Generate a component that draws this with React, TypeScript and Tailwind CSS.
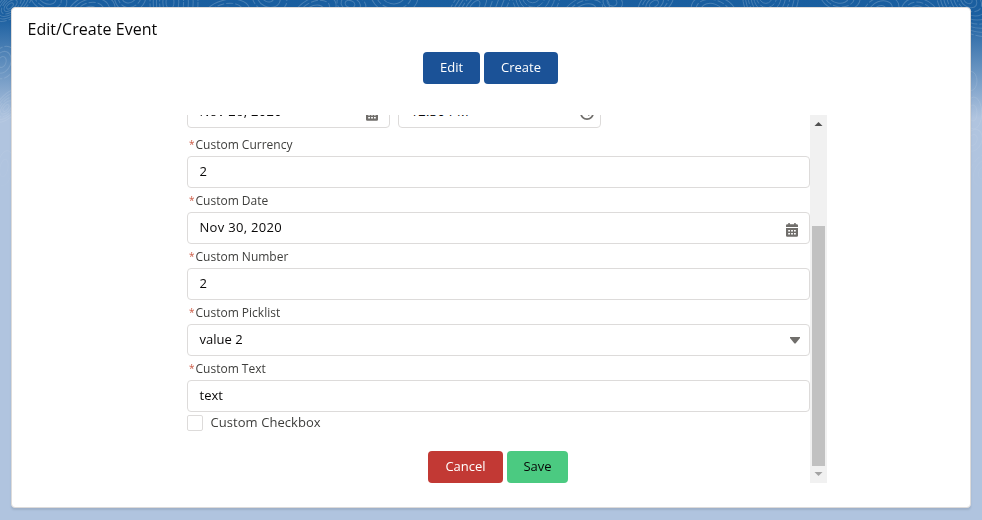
import React from "react";

type Hill = { x: number; y: number; rings: number; step: number; angle: number; squash: number };

const hills: Hill[] = [
  { x: 10, y: 6, rings: 6, step: 4, angle: -40, squash: 0.5 },
  { x: 2, y: 62, rings: 3, step: 4, angle: 20, squash: 1.4 },
  { x: 6, y: 108, rings: 5, step: 4, angle: -50, squash: 0.5 },
  { x: 4, y: 168, rings: 2, step: 4, angle: 10, squash: 2.2 },
  { x: 46, y: -4, rings: 4, step: 5, angle: 30, squash: 0.7 },
  { x: 88, y: 14, rings: 5, step: 5, angle: -20, squash: 0.7 },
  { x: 128, y: -6, rings: 4, step: 4, angle: 15, squash: 1.1 },
  { x: 170, y: 2, rings: 6, step: 4, angle: 0, squash: 1.8 },
  { x: 224, y: 15, rings: 4, step: 6, angle: -15, squash: 0.6 },
  { x: 268, y: -3, rings: 3, step: 6, angle: 25, squash: 0.8 },
  { x: 312, y: 14, rings: 4, step: 6, angle: -30, squash: 0.6 },
  { x: 350, y: 4, rings: 3, step: 5, angle: 20, squash: 0.7 },
  { x: 392, y: -6, rings: 4, step: 6, angle: 12, squash: 0.8 },
  { x: 474, y: 8, rings: 6, step: 4, angle: 35, squash: 2.2 },
  { x: 532, y: -6, rings: 6, step: 4, angle: 0, squash: 1.1 },
  { x: 584, y: 12, rings: 4, step: 6, angle: -20, squash: 0.6 },
  { x: 612, y: 2, rings: 2, step: 5, angle: 20, squash: 0.8 },
  { x: 654, y: 4, rings: 4, step: 5, angle: -35, squash: 0.6 },
  { x: 712, y: 12, rings: 4, step: 6, angle: 20, squash: 0.7 },
  { x: 765, y: -5, rings: 8, step: 3.5, angle: 0, squash: 1.2 },
  { x: 838, y: -4, rings: 4, step: 5, angle: 10, squash: 0.7 },
  { x: 880, y: 10, rings: 3, step: 6, angle: -20, squash: 0.7 },
  { x: 918, y: 14, rings: 4, step: 5, angle: 30, squash: 0.8 },
  { x: 968, y: 0, rings: 9, step: 4.5, angle: 35, squash: 0.7 },
  { x: 971, y: 81, rings: 1, step: 6, angle: 0, squash: 1.6 },
  { x: 973, y: 113, rings: 2, step: 4, angle: 0, squash: 2 },
  { x: 973, y: 140, rings: 2, step: 4, angle: 20, squash: 1.4 },
  { x: 984, y: 172, rings: 3, step: 5, angle: 30, squash: 1.5 },
];

function Contours() {
  return (
    <svg className="absolute inset-x-0 top-0" width="982" height="190" fill="none" aria-hidden="true">
      <defs>
        <linearGradient id="fade" x1="0" y1="0" x2="0" y2="1">
          <stop offset="0" stopColor="#fff" stopOpacity="0.2" />
          <stop offset="1" stopColor="#fff" stopOpacity="0.02" />
        </linearGradient>
        <mask id="fadeMask">
          <rect width="982" height="190" fill="url(#fade)" />
        </mask>
      </defs>
      <g mask="url(#fadeMask)" stroke="#fff">
        {hills.map((h) => (
          <g key={`${h.x}-${h.y}`} transform={`translate(${h.x} ${h.y}) rotate(${h.angle})`}>
            {Array.from({ length: h.rings }, (_, i) => (
              <ellipse key={i} cx={i * 0.8} rx={(i + 1) * h.step} ry={(i + 1) * h.step * h.squash} strokeDasharray={i % 3 === 2 ? "7 2" : undefined} />
            ))}
          </g>
        ))}
      </g>
    </svg>
  );
}

function CalendarIcon() {
  return (
    <svg width="12" height="14" viewBox="0 0 12 14" fill="#706e6b" aria-hidden="true">
      <path d="M2.300 0h1.500v1.200h4.400V0h1.500v1.200h1Q12 1.200 12 2.500V4H0V2.500Q0 1.200 1.300 1.200h1Z" />
      <path
        fillRule="evenodd"
        d="M0 5h12v7.500q0 1.200-1.200 1.200H1.200Q0 13.700 0 12.500ZM2.200 7v1.500h1.800V7ZM5.100 7v1.500h1.800V7ZM8 7v1.500h1.800V7ZM2.200 10v1.500h1.800V10ZM5.100 10v1.500h1.800V10ZM8 10v1.500h1.800V10Z"
      />
    </svg>
  );
}

function ClockIcon() {
  return (
    <svg width="14" height="14" viewBox="0 0 14 14" fill="none" stroke="#706e6b" strokeWidth="1.8" aria-hidden="true">
      <circle cx="7" cy="7" r="6.100" />
      <path d="M7 3v4l2.500 2.200" />
    </svg>
  );
}

const box = "flex h-8 items-center justify-between rounded border border-[#dddbda] bg-white pl-[11.5px] text-[13px] text-[#080707]";

function Field({ label, value, valueClass = "", icon }: { label: string; value: string; valueClass?: string; icon?: React.ReactNode }) {
  return (
    <div>
      <div className="flex h-6 items-center pt-[2px] pl-[2px] text-[12px] text-[#3e3e3c]">
        <span className="w-[6.5px] pb-[2px] text-[10px] text-[#cb5a45]">*</span>
        <span className="whitespace-nowrap">{label}</span>
      </div>
      <div className={box}>
        <span className={`whitespace-nowrap pb-px ${valueClass}`}>{value}</span>
        {icon}
      </div>
    </div>
  );
}

export default function App() {
  return (
    <div className="relative h-[520px] w-[982px] overflow-hidden bg-[#b0c4df] bg-[linear-gradient(to_bottom,#195e9f_0px,#1c60a1_18px,#b0c4df_118px)] pt-[7px] pl-[11px] font-['Open_Sans','Noto_Sans',sans-serif]">
      <Contours />
      <main className="relative h-[501px] w-[960px] rounded border border-[#dddbda] bg-white shadow-[0_2px_2px_rgba(0,0,0,0.1)]">
        <h1 className="h-11 pt-[9px] pl-[15.5px] text-[16px] leading-6 tracking-[0.05px] text-[#080707]">Edit/Create Event</h1>
        <div className="flex gap-1 pl-[411px] text-[13px] font-medium text-white">
          <button className="h-8 w-[57px] rounded bg-[#1b5297]">Edit</button>
          <button className="h-8 w-[74px] rounded bg-[#1b5297]">Create</button>
        </div>
        <section className="mt-[31px] ml-[175px] flex h-[368px] w-[640px] overflow-hidden">
          <div className="-mt-[19px] w-[623px] shrink-0">
            <div className="mb-1 flex gap-2">
              <div className={`${box} w-[203px] pr-[11px]`}>
                <span className="pb-px tracking-[0.3px]">Nov 26, 2020</span>
                <span className="pt-[3px]"><CalendarIcon /></span>
              </div>
              <div className={`${box} w-[203px] pr-[6px]`}>
                <span className="pb-px tracking-[0.3px]">12:30 PM</span>
                <span className="pt-[2px]"><ClockIcon /></span>
              </div>
            </div>
            <Field label="Custom Currency" value="2" />
            <Field
              label="Custom Date"
              value="Nov 30, 2020"
              valueClass="tracking-[0.3px]"
              icon={<span className="pt-[3px] pr-[11px]"><CalendarIcon /></span>}
            />
            <Field label="Custom Number" value="2" />
            <Field
              label="Custom Picklist"
              value="value 2"
              icon={
                <svg className="mt-px mr-[9px]" width="10" height="7" viewBox="0 0 10 7" fill="#706e6b" aria-hidden="true">
                  <path d="M0 0h10v1L5.500 6.600h-1L0 1Z" />
                </svg>
              }
            />
            <Field label="Custom Text" value="text" />
            <div className="mt-[3px] flex h-4 items-center gap-[7.5px] text-[13px] text-[#3e3e3c]">
              <span className="size-4 rounded-[2px] border border-[#dddbda] bg-white" />
              <span className="tracking-[0.06px]">Custom Checkbox</span>
            </div>
            <div className="mt-5 flex gap-1 pl-[241px] text-[13px]">
              <button className="h-8 w-[75px] rounded bg-[#c23934] font-medium text-white">Cancel</button>
              <button className="h-8 w-[61px] rounded bg-[#4bca81] text-[#080707]">Save</button>
            </div>
          </div>
          <div className="flex w-[17px] flex-col items-center bg-[#f1f1f1]">
            <svg className="mt-[7px]" width="9" height="4" viewBox="0 0 9 4" fill="#505050" aria-hidden="true">
              <path d="M4.500 0 8.500 4h-8Z" />
            </svg>
            <div className="mt-[100px] h-[240px] w-[13px] bg-[#c1c1c1]" />
            <svg className="mt-[6px]" width="9" height="4" viewBox="0 0 9 4" fill="#a3a3a3" aria-hidden="true">
              <path d="M0.500 0h8l-4 4Z" />
            </svg>
          </div>
        </section>
      </main>
    </div>
  );
}
